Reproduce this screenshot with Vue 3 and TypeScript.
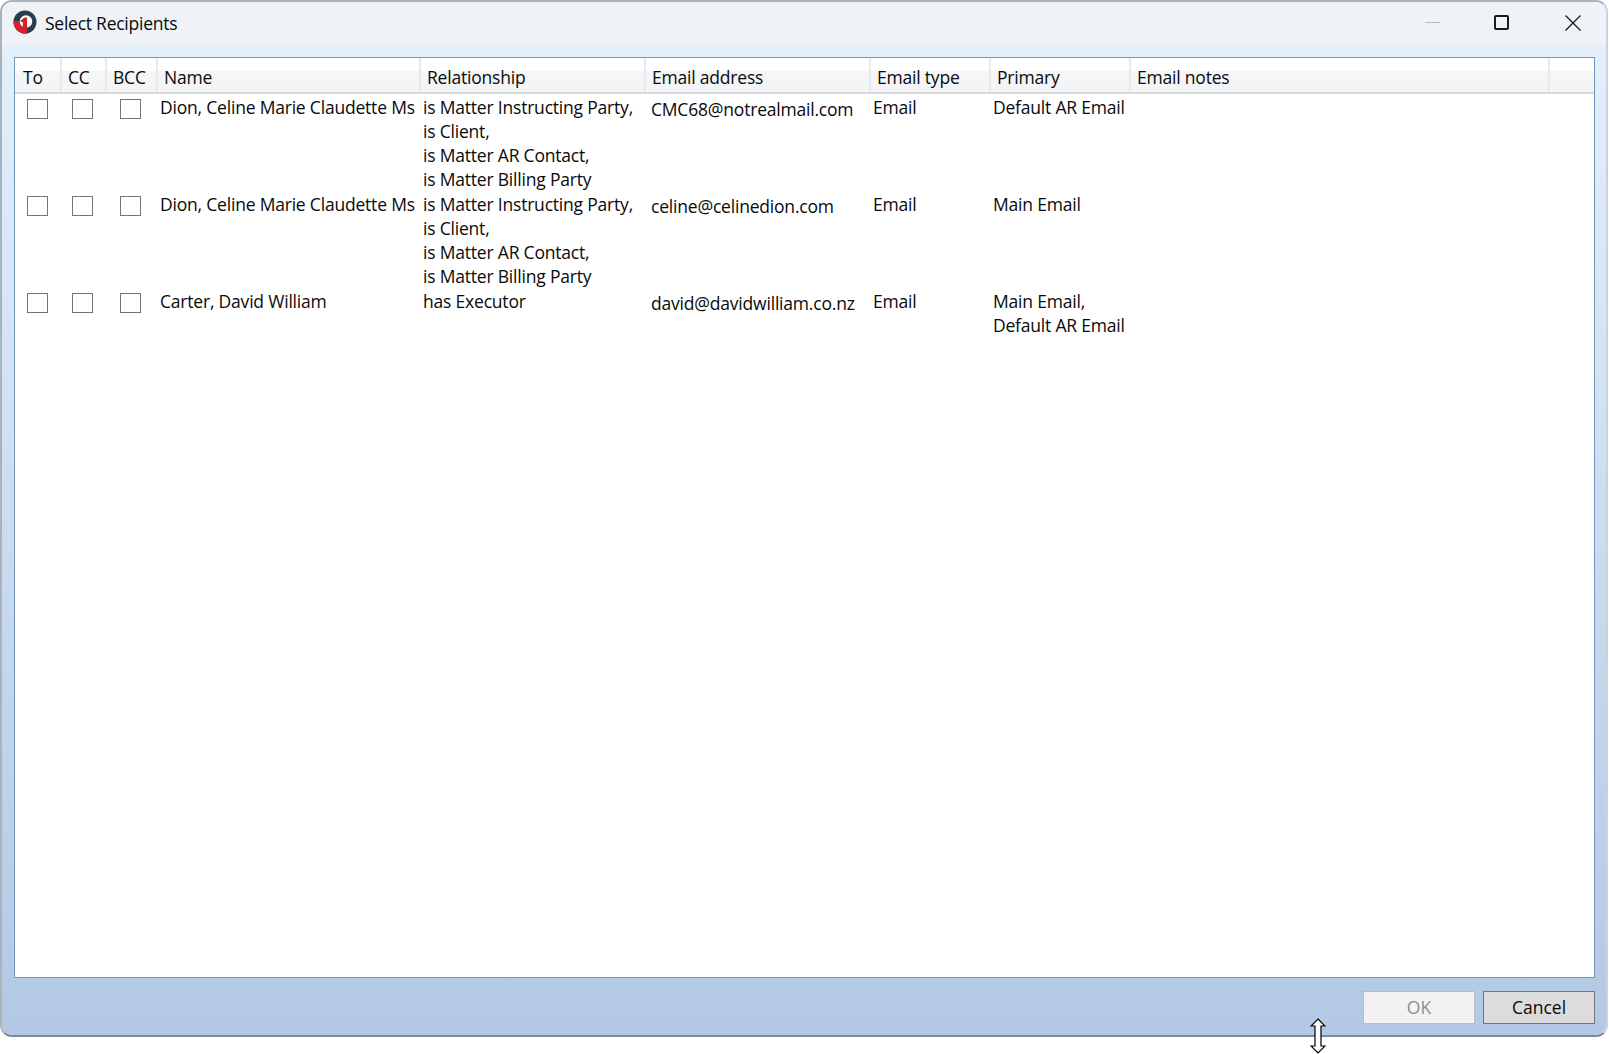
<template>
  <div class="page">
    <div class="window">
      <div class="titlebar">
        <svg class="logo" viewBox="0 0 24 24" width="24" height="24">
          <circle cx="12" cy="12" r="11.5" fill="#2a3f4d" />
          <path d="M13 11 L0.55 11 A11.5 11.5 0 0 0 13 23.45 Z" fill="#d8202a" />
          <circle cx="13" cy="11.5" r="6.2" fill="#fff" />
          <path d="M7.8 10.6 L11.6 7.4 H14 V23.4 H9.8 V12 H7.8 Z" fill="#d8202a" />
        </svg>
        <span class="title">Select Recipients</span>
        <div class="controls">
          <span class="minimize" />
          <span class="maximize" />
          <svg class="close" viewBox="0 0 16 16" width="16" height="16">
            <path d="M0.5 0.5 L15.5 15.5 M15.5 0.5 L0.5 15.5" stroke="#1a1a1a" stroke-width="1.3" fill="none" />
          </svg>
        </div>
      </div>

      <div class="body">
        <div class="grid">
          <div class="row header">
            <div v-for="col in columns" :key="col" class="head-cell">{{ col }}</div>
            <div class="head-cell filler" />
          </div>
          <div v-for="(r, i) in recipients" :key="i" class="row" :class="{ tall: r.relationship.length > 1 }">
            <div class="check-cell"><span class="checkbox" /></div>
            <div class="check-cell"><span class="checkbox" /></div>
            <div class="check-cell"><span class="checkbox" /></div>
            <div class="cell name">{{ r.name }}</div>
            <div class="cell rel">
              <div v-for="line in r.relationship" :key="line">{{ line }}</div>
            </div>
            <div class="cell email">{{ r.email }}</div>
            <div class="cell type">{{ r.type }}</div>
            <div class="cell primary">
              <div v-for="line in r.primary" :key="line">{{ line }}</div>
            </div>
            <div class="cell" />
            <div class="cell" />
          </div>
        </div>

        <div class="footer">
          <button class="btn disabled" type="button">OK</button>
          <button class="btn" type="button">Cancel</button>
        </div>
      </div>
    </div>

    <svg class="cursor" viewBox="0 0 16 36" width="16" height="36">
      <path d="M8 1 L15 8 H11 V28 H15 L8 35 L1 28 H5 V8 H1 Z" fill="#fff" stroke="#000" stroke-width="1.2" stroke-linejoin="miter" />
    </svg>
  </div>
</template>

<script setup lang="ts">
interface Recipient {
  name: string
  relationship: string[]
  email: string
  type: string
  primary: string[]
}

const columns = ['To', 'CC', 'BCC', 'Name', 'Relationship', 'Email address', 'Email type', 'Primary', 'Email notes']

const allRoles = ['is Matter Instructing Party,', 'is Client,', 'is Matter AR Contact,', 'is Matter Billing Party']

const recipients: Recipient[] = [
  {
    name: 'Dion, Celine Marie Claudette Ms',
    relationship: allRoles,
    email: 'CMC68@notrealmail.com',
    type: 'Email',
    primary: ['Default AR Email'],
  },
  {
    name: 'Dion, Celine Marie Claudette Ms',
    relationship: allRoles,
    email: 'celine@celinedion.com',
    type: 'Email',
    primary: ['Main Email'],
  },
  {
    name: 'Carter, David William',
    relationship: ['has Executor'],
    email: 'david@davidwilliam.co.nz',
    type: 'Email',
    primary: ['Main Email,', 'Default AR Email'],
  },
]
</script>

<style>
html,
body {
  margin: 0;
  background: #fff;
}
</style>

<style scoped>
.page {
  position: relative;
  width: 1609px;
  height: 1054px;
  overflow: hidden;
  background: #fff;
  font-family: "Open Sans", "Noto Sans", sans-serif;
  font-size: 17.5px;
  color: #0a0a0a;
}

.window {
  box-sizing: border-box;
  width: 1608px;
  height: 1037px;
  display: flex;
  flex-direction: column;
  border: 2px solid #aab2ba;
  border-right-color: #c9d3de;
  border-bottom-color: #7f8a9c;
  border-radius: 12px;
  overflow: hidden;
}

.titlebar {
  box-sizing: border-box;
  height: 43px;
  flex: none;
  display: flex;
  align-items: center;
  padding: 0 0 2px 11px;
  background: #eff3f8;
}

.logo {
  flex: none;
  margin-top: -1px;
}

.title {
  margin-left: 8px;
  letter-spacing: -0.25px;
}

.controls {
  margin-left: auto;
  display: flex;
  align-items: center;
  padding-right: 25px;
}

.minimize {
  width: 15px;
  height: 1px;
  background: #b9bdc2;
  margin-right: 54px;
}

.maximize {
  box-sizing: border-box;
  width: 15px;
  height: 15px;
  border: 2px solid #1a1a1a;
  border-radius: 2px;
  margin-right: 56px;
}

.body {
  flex: 1;
  min-height: 0;
  display: flex;
  flex-direction: column;
  padding: 12px 11px 0 12px;
  background: linear-gradient(to bottom, #e4effc 0%, #b2c8e4 100%);
}

.grid {
  box-sizing: border-box;
  height: 921px;
  border: 1px solid #6f97bd;
  background: #fff;
}

.row {
  display: grid;
  grid-template-columns: 47px 45px 51px 263px 225px 225px 120px 140px 419px 1fr;
  line-height: 24px;
}

.row.tall {
  height: 97px;
}

.header {
  height: 36px;
  background: linear-gradient(to bottom, #fff 0%, #fff 38%, #f5f6f7 39%, #f3f4f5 100%);
  border-bottom: 2px solid #d8d9da;
  box-sizing: border-box;
}

.head-cell {
  padding: 7px 0 0 6px;
  border-right: 2px solid #e8e9ea;
  box-sizing: border-box;
  white-space: nowrap;
  letter-spacing: -0.2px;
}

.head-cell:first-child {
  padding-left: 8px;
}

.filler {
  border-right: none;
}

.check-cell {
  display: flex;
  justify-content: center;
  padding: 5px 4px 0 0;
}

.check-cell:first-child {
  padding-right: 2px;
}

.checkbox {
  box-sizing: border-box;
  width: 21px;
  height: 20px;
  border: 1.5px solid #757575;
  background: #fff;
}

.cell {
  white-space: nowrap;
  padding-top: 1px;
  letter-spacing: -0.2px;
}

.name {
  padding-left: 2px;
}

.rel {
  padding-left: 2px;
}

.email {
  padding-left: 5px;
  padding-top: 3px;
}

.type {
  padding-left: 2px;
}

.primary {
  padding-left: 2px;
}

.footer {
  display: flex;
  justify-content: flex-end;
  gap: 8px;
  padding-top: 13px;
}

.btn {
  box-sizing: border-box;
  width: 112px;
  height: 33px;
  padding: 0 0 1px;
  border: 1.5px solid #777;
  border-radius: 0;
  background: #dcdcdc;
  font: inherit;
  color: #0a0a0a;
}

.btn.disabled {
  border-color: #b4bcc4;
  background: #f2f2f2;
  color: #8e8e8e;
}

.cursor {
  position: absolute;
  left: 1310px;
  top: 1018px;
}
</style>
